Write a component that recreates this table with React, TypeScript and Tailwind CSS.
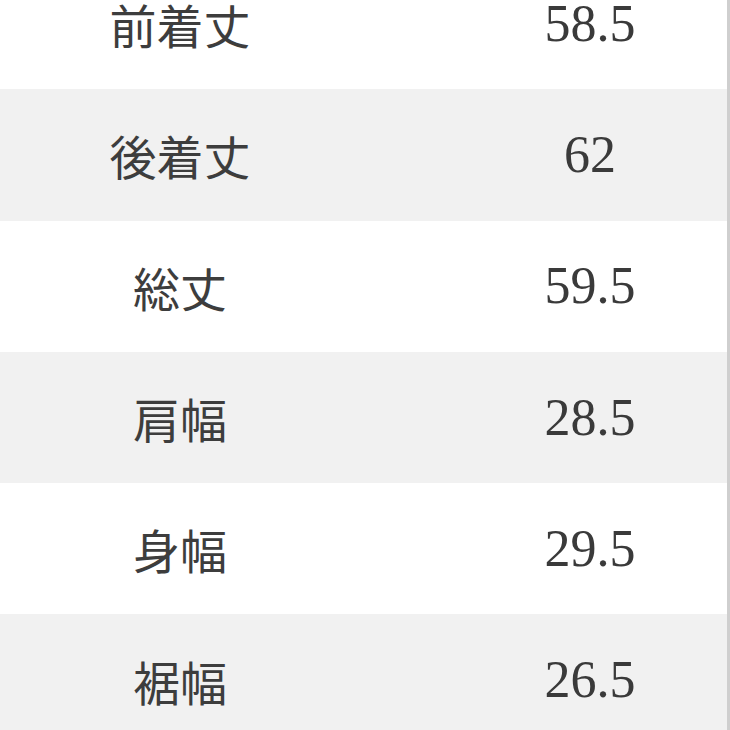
import React from "react";

const rows: [string, string][] = [
  ["前着丈", "58.5"],
  ["後着丈", "62"],
  ["総丈", "59.5"],
  ["肩幅", "28.5"],
  ["身幅", "29.5"],
  ["裾幅", "26.5"],
];

export default function App() {
  return (
    <div className="w-[730px] h-[730px] overflow-hidden bg-white border-r-[3px] border-[#cfcfcf]">
      <div className="-mt-[42px] flex flex-col">
        {rows.map(([label, value], i) => (
          <div
            key={label}
            className={
              i % 2 === 1
                ? "grid grid-cols-[360px_460px] h-[131.3px] items-center bg-[#f1f1f1]"
                : "grid grid-cols-[360px_460px] h-[131.3px] items-center bg-white"
            }
          >
            <div
              className="text-center text-[47px] leading-none text-[#3d3d3d]"
              style={{ fontFamily: '"Noto Sans CJK JP", "Noto Sans", sans-serif' }}
            >
              {label}
            </div>
            <div
              className="text-center text-[52px] leading-none text-[#3a3a3a]"
              style={{ fontFamily: '"Liberation Serif", serif' }}
            >
              {value}
            </div>
          </div>
        ))}
      </div>
    </div>
  );
}
